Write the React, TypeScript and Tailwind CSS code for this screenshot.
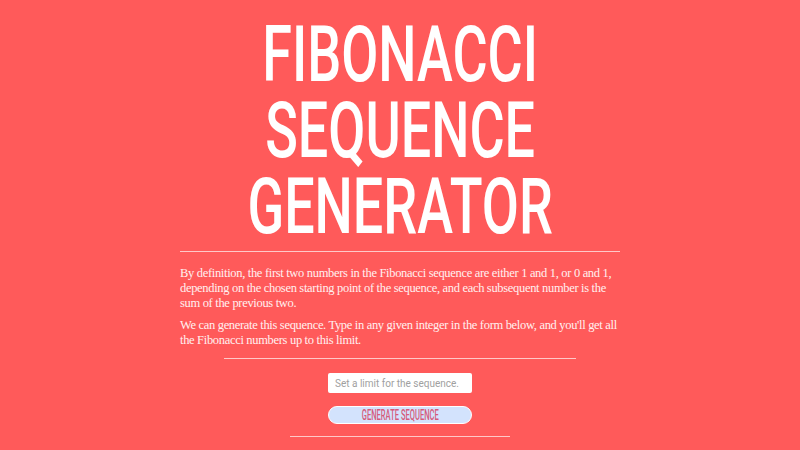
import React, { useState } from 'react';

const display = 'Roboto, "DejaVu Sans Condensed", "Liberation Sans", sans-serif';

export default function App() {
  const [limit, setLimit] = useState('');

  return (
    <div className="min-h-screen w-full bg-[#ff5a5a] flex flex-col items-center pt-[17px]">
      <h1
        className="text-white text-center uppercase font-medium text-[77px] leading-[76px] scale-x-[0.7]"
        style={{ fontFamily: display }}
      >
        <div>Fibonacci</div>
        <div>Sequence</div>
        <div>Generator</div>
      </h1>

      <hr className="w-[440px] mt-[6px] border-0 border-t border-[#ffc8c8]" />

      <div
        className="w-[440px] mt-[14px] text-[12.5px] leading-[15px] tracking-[-0.32px] text-[#fff0f0] whitespace-nowrap"
        style={{ fontFamily: '"Liberation Serif", "DejaVu Serif", serif' }}
      >
        <p>
          By definition, the first two numbers in the Fibonacci sequence are either 1 and 1, or 0 and 1,
          <br />
          depending on the chosen starting point of the sequence, and each subsequent number is the
          <br />
          sum of the previous two.
        </p>
        <p className="mt-[7px]">
          We can generate this sequence. Type in any given integer in the form below, and you'll get all
          <br />
          the Fibonacci numbers up to this limit.
        </p>
      </div>

      <hr className="w-[352px] mt-[10px] border-0 border-t border-[#ffc8c8]" />

      <input
        type="text"
        value={limit}
        onChange={(e) => setLimit(e.target.value)}
        placeholder="Set a limit for the sequence."
        className="mt-[14px] w-[144px] h-[20px] bg-white rounded-[2px] px-[7px] text-[10px] text-gray-700 placeholder:text-[#a0a0a0] outline-none"
        style={{ fontFamily: 'Roboto, "Liberation Sans", Arial, sans-serif' }}
      />

      <button
        className="mt-[13px] w-[144px] h-[18px] rounded-[9px] bg-[#d3e3fd] border border-white text-[#d65a7a] text-[14px] leading-none uppercase font-medium flex items-center justify-center overflow-visible"
        style={{ fontFamily: display }}
      >
        <span className="shrink-0 whitespace-nowrap inline-block scale-x-[0.54]">Generate Sequence</span>
      </button>

      <hr className="w-[220px] mt-[12px] border-0 border-t border-[#ffc8c8]" />
    </div>
  );
}
